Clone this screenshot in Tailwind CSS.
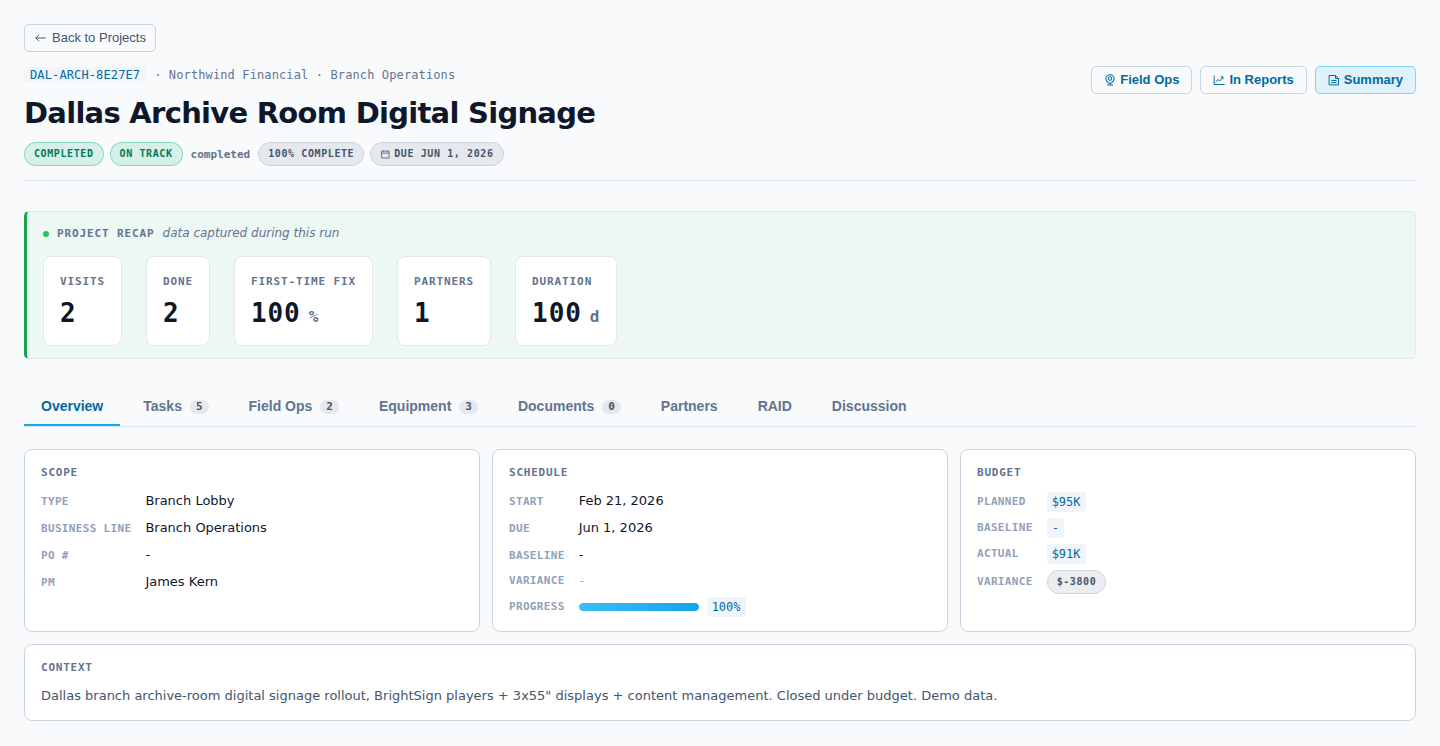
<!DOCTYPE html>
<html lang="en">
<head>
<meta charset="utf-8">
<meta name="viewport" content="width=device-width, initial-scale=1">
<title>Dallas Archive Room Digital Signage</title>
<script src="https://cdn.jsdelivr.net/npm/@tailwindcss/browser@4"></script>
</head>
<body class="min-h-screen bg-slate-50 p-6 font-['DejaVu_Sans',sans-serif] text-[13px] text-slate-900">

<a href="#" class="mb-3.5 inline-flex h-7 items-center gap-1.5 rounded-[5px] border border-slate-300 px-[9px] align-top font-['Liberation_Sans',sans-serif] text-[13px] text-slate-600">
  <svg class="size-3" viewBox="0 0 16 16" fill="none" stroke="currentColor" stroke-width="1.3" stroke-linecap="round" stroke-linejoin="round" aria-hidden="true"><path d="M15 8H2.500M6.500 4l-4 4 4 4"/></svg>
  Back to Projects
</a>

<header class="flex flex-wrap items-start justify-between gap-4 border-b border-slate-200 pb-3.5">
  <div>
    <div class="flex h-[18px] items-center gap-2 font-['DejaVu_Sans_Mono',monospace] text-xs tracking-[0.01em] text-slate-500">
      <span class="rounded-[3px] bg-slate-100 px-1.5 leading-4 text-[#0369a1]">DAL-ARCH-8E27E7</span>
      <span>· Northwind Financial · Branch Operations</span>
    </div>
    <h1 class="mt-3 text-[29px] leading-[34px] font-bold tracking-tight">Dallas Archive Room Digital Signage</h1>
    <div class="mt-3 flex flex-wrap items-center gap-1.5 font-['DejaVu_Sans_Mono',monospace] text-[10px] font-bold">
      <span class="flex h-6 items-center rounded-full border border-[#10b981]/40 bg-[#10b981]/15 px-[9px] pb-px tracking-[0.06em] text-[#047857]">COMPLETED</span>
      <span class="flex h-6 items-center rounded-full border border-[#10b981]/40 bg-[#10b981]/15 px-[9px] pb-px tracking-[0.06em] text-[#047857]">ON TRACK</span>
      <span class="px-0.5 pt-0.5 text-[11px] text-slate-500">completed</span>
      <span class="flex h-6 items-center rounded-full border border-slate-300 bg-slate-500/13 px-[9px] pb-px tracking-[0.06em] text-slate-600">100% COMPLETE</span>
      <span class="flex h-6 items-center gap-1 rounded-full border border-slate-300 bg-slate-500/13 px-[9px] pb-px tracking-[0.06em] text-slate-600">
        <svg class="size-2.5" viewBox="0 0 16 16" fill="none" stroke="currentColor" stroke-width="1.2" aria-hidden="true"><path d="M2.500 3.500h12v11h-12zM2.500 6.500h12M5.500 2v1.500M11.500 2v1.500"/></svg>
        DUE JUN 1, 2026
      </span>
    </div>
  </div>
  <div class="flex gap-2 font-['Liberation_Sans',sans-serif] text-[13px] font-bold text-[#0369a1]">
    <button type="button" class="flex h-7 items-center gap-1 rounded-[5px] border border-slate-300 px-3">
      <svg class="size-3" viewBox="0 0 16 16" fill="none" stroke="currentColor" stroke-width="1.4" stroke-linecap="round" stroke-linejoin="round" aria-hidden="true"><path d="M8 13.200C5 11.200 2.500 9.200 2.500 6.300a5.500 5.300 0 0 1 11 0c0 2.900-2.500 4.900-5.500 6.900ZM4.500 14.700h7"/><circle cx="8" cy="6" r="2.300"/></svg>
      Field Ops
    </button>
    <button type="button" class="flex h-7 items-center gap-1 rounded-[5px] border border-slate-300 px-3">
      <svg class="size-3" viewBox="0 0 16 16" fill="none" stroke="currentColor" stroke-width="1.3" stroke-linecap="round" stroke-linejoin="round" aria-hidden="true"><path d="M1.500 2.500v11.500h13.500M4 10.500l2.500-3.200 2.500 2 4-5M10.500 3.800h2.700v2.700"/></svg>
      In Reports
    </button>
    <button type="button" class="flex h-7 items-center gap-1 rounded-[5px] border border-[#7dd3fc] bg-[#dff1fb] px-3">
      <svg class="size-3" viewBox="0 0 16 16" fill="none" stroke="currentColor" stroke-width="1.3" stroke-linecap="round" stroke-linejoin="round" aria-hidden="true"><path d="M2 2h8l4 4v8.500h-12zM10 2v4h4M5 8.700h6M5 11.500h6"/></svg>
      Summary
    </button>
  </div>
</header>

<section class="mt-[30px] rounded-[5px] border border-l-3 border-slate-200 border-l-[#16a34a] bg-[#edf7f4] px-4 py-3">
  <div class="flex h-5 items-baseline gap-2 leading-[18px]">
    <span class="size-1.5 self-center rounded-full bg-[#22c55e]"></span>
    <h2 class="font-['DejaVu_Sans_Mono',monospace] text-[11px] font-bold tracking-[0.08em] text-slate-500">PROJECT RECAP</h2>
    <em class="text-[12px] text-slate-500">data captured during this run</em>
  </div>
  <dl class="mt-3 flex flex-wrap gap-6 font-['DejaVu_Sans_Mono',monospace] text-[11px] font-bold tracking-[0.08em] text-slate-500">
    <div class="rounded-lg border border-slate-200 bg-white p-4">
      <dt class="leading-[17px]">VISITS</dt>
      <dd class="mt-2 text-[26px] leading-[31px] text-slate-900">2</dd>
    </div>
    <div class="rounded-lg border border-slate-200 bg-white p-4">
      <dt class="leading-[17px]">DONE</dt>
      <dd class="mt-2 text-[26px] leading-[31px] text-slate-900">2</dd>
    </div>
    <div class="rounded-lg border border-slate-200 bg-white p-4">
      <dt class="leading-[17px]">FIRST-TIME FIX</dt>
      <dd class="mt-2 flex items-baseline gap-2 text-[26px] leading-[31px] text-slate-900">100<span class="text-base leading-5 text-slate-500">%</span></dd>
    </div>
    <div class="rounded-lg border border-slate-200 bg-white p-4">
      <dt class="leading-[17px]">PARTNERS</dt>
      <dd class="mt-2 text-[26px] leading-[31px] text-slate-900">1</dd>
    </div>
    <div class="rounded-lg border border-slate-200 bg-white p-4">
      <dt class="leading-[17px]">DURATION</dt>
      <dd class="mt-2 flex items-baseline gap-2 text-[26px] leading-[31px] text-slate-900">100<span class="text-base leading-5 text-slate-500">d</span></dd>
    </div>
  </dl>
</section>

<nav role="tablist" class="mt-[30px] flex flex-wrap gap-1.5 border-b border-slate-200 font-['Liberation_Sans',sans-serif] text-sm leading-[19px] font-bold text-slate-500">
  <button type="button" role="tab" aria-selected="true" class="border-b-2 border-[#0ea5e9] px-[17px] py-2 text-[#0369a1]">Overview</button>
  <button type="button" role="tab" class="flex items-center gap-2 border-b-2 border-transparent px-[17px] py-2">Tasks <span class="rounded-full bg-slate-500/13 px-1.5 font-['DejaVu_Sans_Mono',monospace] text-[11px] leading-3.5 text-slate-600">5</span></button>
  <button type="button" role="tab" class="flex items-center gap-2 border-b-2 border-transparent px-[17px] py-2">Field Ops <span class="rounded-full bg-slate-500/13 px-1.5 font-['DejaVu_Sans_Mono',monospace] text-[11px] leading-3.5 text-slate-600">2</span></button>
  <button type="button" role="tab" class="flex items-center gap-2 border-b-2 border-transparent px-[17px] py-2">Equipment <span class="rounded-full bg-slate-500/13 px-1.5 font-['DejaVu_Sans_Mono',monospace] text-[11px] leading-3.5 text-slate-600">3</span></button>
  <button type="button" role="tab" class="flex items-center gap-2 border-b-2 border-transparent px-[17px] py-2">Documents <span class="rounded-full bg-slate-500/13 px-1.5 font-['DejaVu_Sans_Mono',monospace] text-[11px] leading-3.5 text-slate-600">0</span></button>
  <button type="button" role="tab" class="border-b-2 border-transparent px-[17px] py-2">Partners</button>
  <button type="button" role="tab" class="border-b-2 border-transparent px-[17px] py-2">RAID</button>
  <button type="button" role="tab" class="border-b-2 border-transparent px-[17px] py-2">Discussion</button>
</nav>

<main class="mt-[22px] grid gap-3 md:grid-cols-3">
  <section class="rounded-lg border border-slate-300 bg-white px-4 py-3.5">
    <h2 class="mb-2.5 font-['DejaVu_Sans_Mono',monospace] text-[11px] leading-[17px] font-bold tracking-[0.07em] text-slate-500">SCOPE</h2>
    <dl class="grid grid-cols-[auto_1fr] items-baseline gap-x-3.5 gap-y-2 leading-[19px] [&>dt]:font-['DejaVu_Sans_Mono',monospace] [&>dt]:text-[11px] [&>dt]:leading-4 [&>dt]:font-bold [&>dt]:tracking-[0.03em] [&>dt]:text-slate-400">
      <dt>TYPE</dt><dd>Branch Lobby</dd>
      <dt>BUSINESS LINE</dt><dd>Branch Operations</dd>
      <dt>PO #</dt><dd>-</dd>
      <dt>PM</dt><dd>James Kern</dd>
    </dl>
  </section>
  <section class="rounded-lg border border-slate-300 bg-white px-4 py-3.5">
    <h2 class="mb-2.5 font-['DejaVu_Sans_Mono',monospace] text-[11px] leading-[17px] font-bold tracking-[0.07em] text-slate-500">SCHEDULE</h2>
    <dl class="grid grid-cols-[auto_1fr] items-baseline gap-x-3.5 gap-y-2 leading-[19px] [&>dt]:font-['DejaVu_Sans_Mono',monospace] [&>dt]:text-[11px] [&>dt]:leading-4 [&>dt]:font-bold [&>dt]:tracking-[0.03em] [&>dt]:text-slate-400">
      <dt>START</dt><dd>Feb 21, 2026</dd>
      <dt>DUE</dt><dd>Jun 1, 2026</dd>
      <dt>BASELINE</dt><dd>-</dd>
      <dt>VARIANCE</dt><dd class="font-['DejaVu_Sans_Mono',monospace] text-[11px] leading-[17px] text-slate-400">-</dd>
      <dt class="self-center">PROGRESS</dt>
      <dd class="flex items-center gap-2">
        <div role="progressbar" aria-label="Progress" aria-valuenow="100" class="h-2 w-30 overflow-hidden rounded-full bg-slate-200"><div class="h-full rounded-full bg-linear-to-r from-[#38bdf8] to-[#0ea5e9]" style="width:100%"></div></div>
        <span class="rounded-[3px] bg-slate-100 px-[5px] font-['DejaVu_Sans_Mono',monospace] text-xs leading-5 text-[#0369a1]">100%</span>
      </dd>
    </dl>
  </section>
  <section class="rounded-lg border border-slate-300 bg-white px-4 py-3.5">
    <h2 class="mb-2.5 font-['DejaVu_Sans_Mono',monospace] text-[11px] leading-[17px] font-bold tracking-[0.07em] text-slate-500">BUDGET</h2>
    <dl class="grid grid-cols-[auto_1fr] items-center gap-x-3.5 gap-y-1.5 pt-px font-['DejaVu_Sans_Mono',monospace] [&>dd]:flex [&>dt]:text-[11px] [&>dt]:leading-[18px] [&>dt]:font-bold [&>dt]:tracking-[0.03em] [&>dt]:text-slate-400">
      <dt>PLANNED</dt><dd><span class="rounded-[3px] bg-slate-100 px-[5px] text-xs leading-5 text-[#0369a1]">$95K</span></dd>
      <dt>BASELINE</dt><dd><span class="rounded-[3px] bg-slate-100 px-[5px] text-xs leading-5 text-[#0369a1]">-</span></dd>
      <dt>ACTUAL</dt><dd><span class="rounded-[3px] bg-slate-100 px-[5px] text-xs leading-5 text-[#0369a1]">$91K</span></dd>
      <dt>VARIANCE</dt><dd><span class="flex h-6 items-center rounded-full border border-slate-300 bg-slate-500/13 px-[9px] pb-px text-[10px] font-bold tracking-[0.06em] text-slate-600">$-3800</span></dd>
    </dl>
  </section>
  <section class="rounded-lg border border-slate-300 bg-white px-4 pt-3.5 pb-[15px] md:col-span-3">
    <h2 class="mb-2.5 font-['DejaVu_Sans_Mono',monospace] text-[11px] leading-[17px] font-bold tracking-[0.07em] text-slate-500">CONTEXT</h2>
    <p class="leading-[19px] text-slate-600">Dallas branch archive-room digital signage rollout, BrightSign players + 3x55" displays + content management. Closed under budget. Demo data.</p>
  </section>
</main>

</body>
</html>
